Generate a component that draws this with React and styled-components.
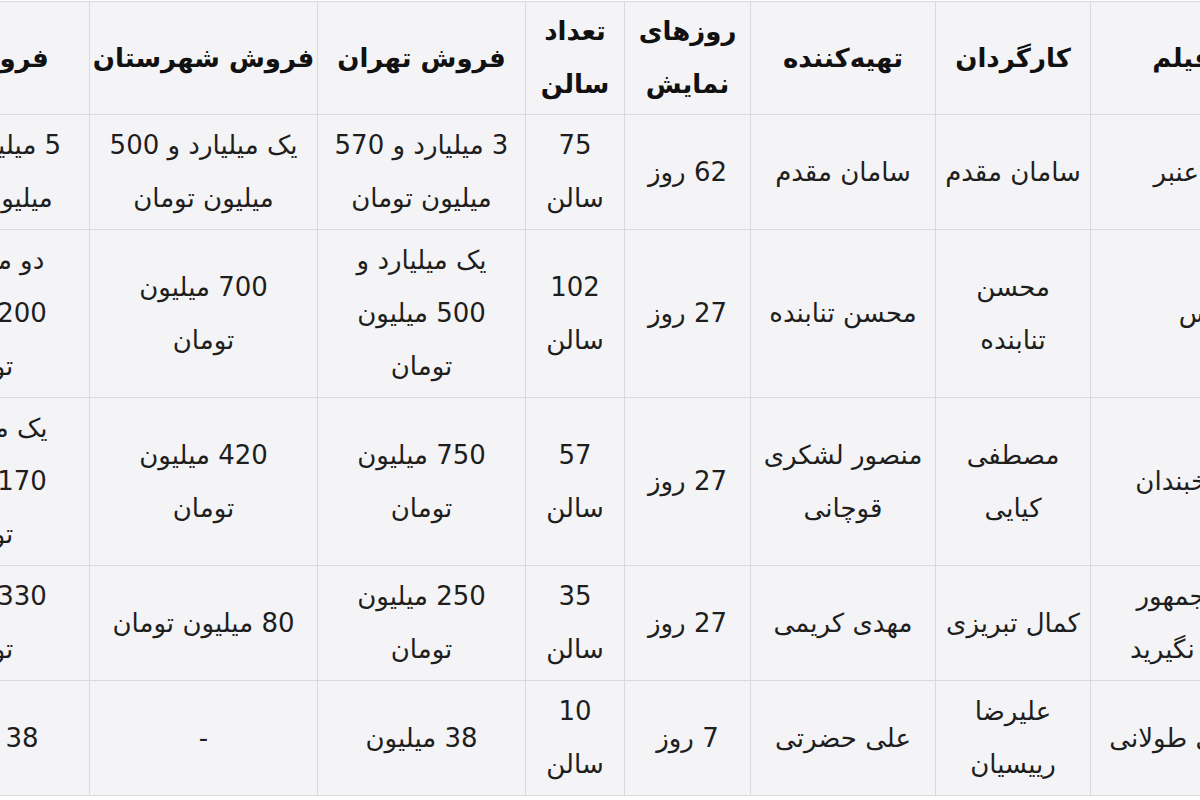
import React from "react";
import styled, { createGlobalStyle } from "styled-components";

const GlobalStyle = createGlobalStyle`
  html, body {
    margin: 0;
    padding: 0;
    background: #ffffff;
  }
  body {
    font-family: "DejaVu Sans", Tahoma, sans-serif;
  }
`;

const Frame = styled.div`
  width: 1200px;
  height: 800px;
  overflow: hidden;
  background: #ffffff;
`;

const Table = styled.table`
  direction: rtl;
  table-layout: fixed;
  border-collapse: collapse;
  width: 1445px;
  margin-left: -125px;
  margin-top: 1px;
  background: #f4f4f6;
  color: #1e1e1e;
  font-size: 26px;
  line-height: 53px;
`;

const Head = styled.th`
  border: 1px solid #d9d9de;
  padding: 3px 2px;
  font-weight: bold;
  color: #111;
  text-align: center;
  vertical-align: middle;
  white-space: nowrap;
`;

const Cell = styled.td`
  border: 1px solid #d9d9de;
  padding: 4px 2px;
  text-align: center;
  vertical-align: middle;
  white-space: nowrap;
`;

// widths listed from the right edge (first column in RTL order)
const widths = [230, 155, 185, 126, 99, 208, 228, 214];

const headers = [
  ["نام فیلم"],
  ["کارگردان"],
  ["تهیه‌کننده"],
  ["روزهای", "نمایش"],
  ["تعداد", "سالن"],
  ["فروش تهران"],
  ["فروش شهرستان"],
  ["فروش کل"],
];

const rows = [
  [
    ["نهنگ عنبر"],
    ["سامان مقدم"],
    ["سامان مقدم"],
    ["62 روز"],
    ["75", "سالن"],
    ["3 میلیارد و 570", "میلیون تومان"],
    ["یک میلیارد و 500", "میلیون تومان"],
    ["5 میلیارد و 70", "میلیون تومان"],
  ],
  [
    ["نفس"],
    ["محسن", "تنابنده"],
    ["محسن تنابنده"],
    ["27 روز"],
    ["102", "سالن"],
    ["یک میلیارد و", "500 میلیون", "تومان"],
    ["700 میلیون", "تومان"],
    ["دو میلیارد و", "200 میلیون", "تومان"],
  ],
  [
    ["عصر یخبندان"],
    ["مصطفی", "کیایی"],
    ["منصور لشکری", "قوچانی"],
    ["27 روز"],
    ["57", "سالن"],
    ["750 میلیون", "تومان"],
    ["420 میلیون", "تومان"],
    ["یک میلیارد و", "170 میلیون", "تومان"],
  ],
  [
    ["رئیس جمهور", "را جدی نگیرید"],
    ["کمال تبریزی"],
    ["مهدی کریمی"],
    ["27 روز"],
    ["35", "سالن"],
    ["250 میلیون", "تومان"],
    ["80 میلیون تومان"],
    ["330 میلیون", "تومان"],
  ],
  [
    ["یک زندگی طولانی"],
    ["علیرضا", "رییسیان"],
    ["علی حضرتی"],
    ["7 روز"],
    ["10", "سالن"],
    ["38 میلیون"],
    ["-"],
    ["38 میلیون"],
  ],
];

const Lines = ({ lines }) =>
  lines.map((line, i) => (
    <React.Fragment key={i}>
      {i > 0 && <br />}
      {line}
    </React.Fragment>
  ));

export default function App() {
  return (
    <>
      <GlobalStyle />
      <Frame>
        <Table>
          <colgroup>
            {widths.map((w, i) => (
              <col key={i} style={{ width: w }} />
            ))}
          </colgroup>
          <thead>
            <tr>
              {headers.map((h, i) => (
                <Head key={i}>
                  <Lines lines={h} />
                </Head>
              ))}
            </tr>
          </thead>
          <tbody>
            {rows.map((row, r) => (
              <tr key={r}>
                {row.map((c, i) => (
                  <Cell key={i}>
                    <Lines lines={c} />
                  </Cell>
                ))}
              </tr>
            ))}
          </tbody>
        </Table>
      </Frame>
    </>
  );
}
